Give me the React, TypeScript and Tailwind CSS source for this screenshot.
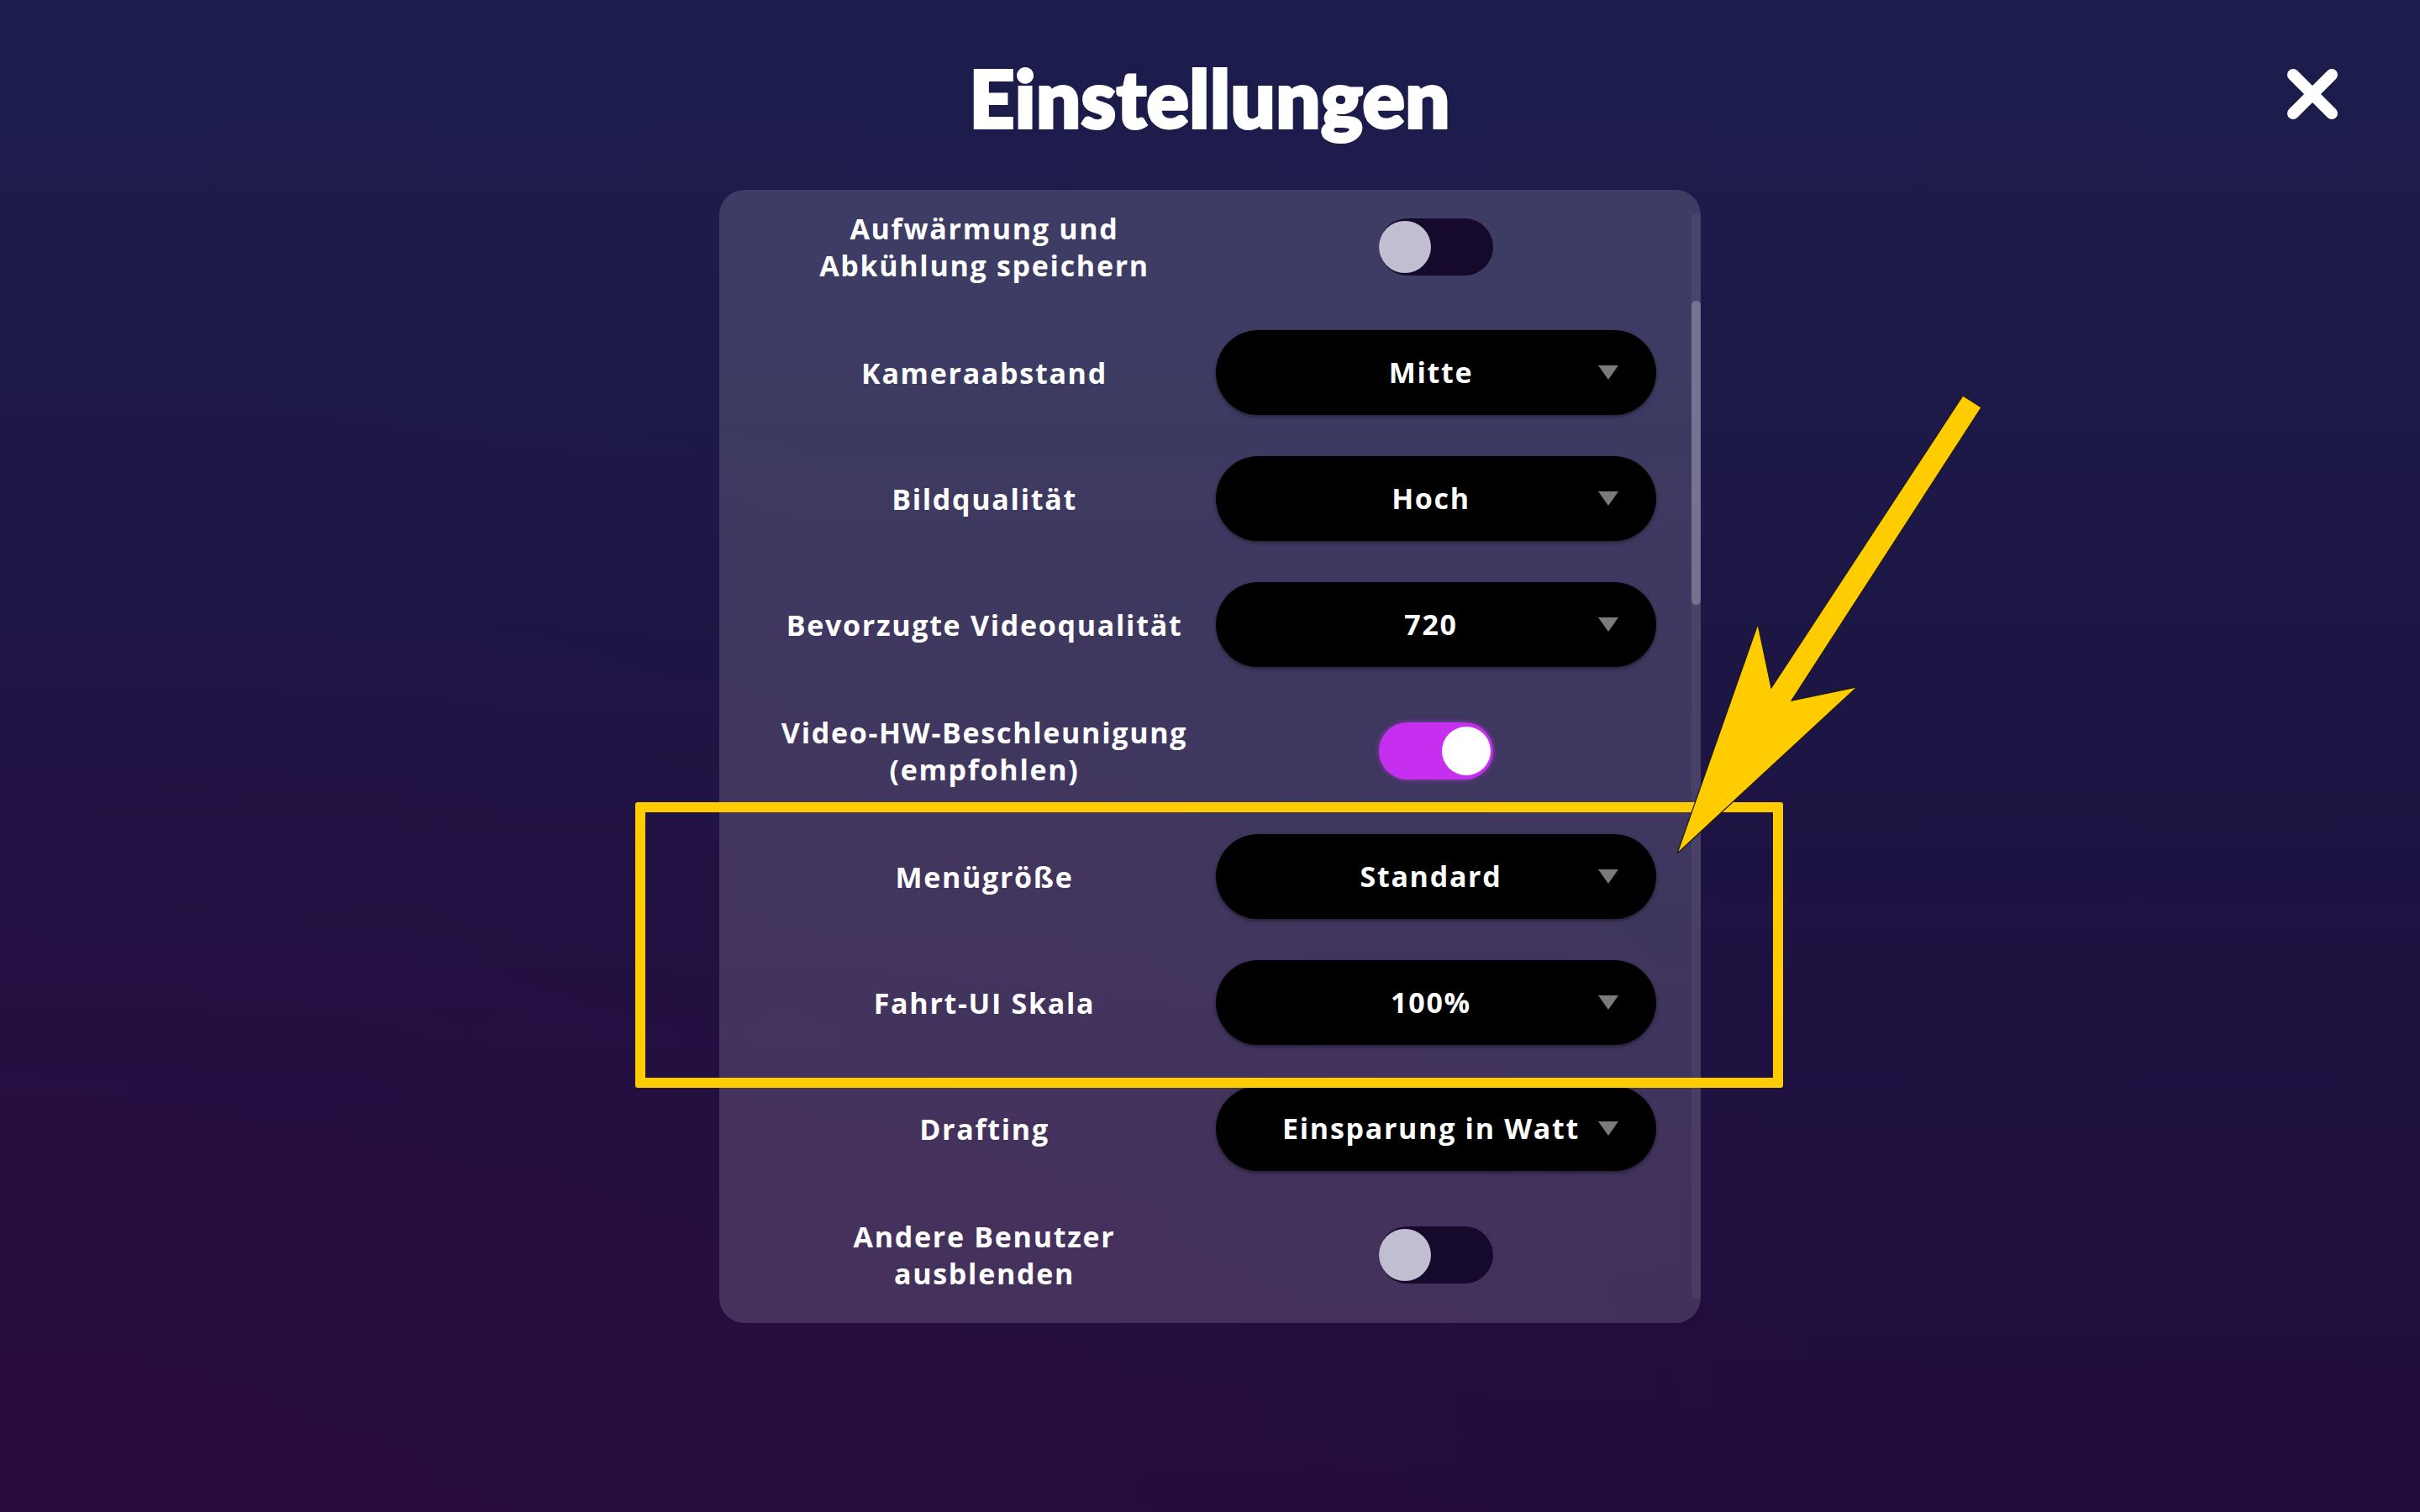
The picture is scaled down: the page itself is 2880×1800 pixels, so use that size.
import { useState } from "react";

type Row =
  | { kind: "toggle"; label: string[]; on: boolean }
  | { kind: "select"; label: string[]; value: string };

const rows: Row[] = [
  { kind: "toggle", label: ["Aufwärmung und", "Abkühlung speichern"], on: false },
  { kind: "select", label: ["Kameraabstand"], value: "Mitte" },
  { kind: "select", label: ["Bildqualität"], value: "Hoch" },
  { kind: "select", label: ["Bevorzugte Videoqualität"], value: "720" },
  { kind: "toggle", label: ["Video-HW-Beschleunigung", "(empfohlen)"], on: true },
  { kind: "select", label: ["Menügröße"], value: "Standard" },
  { kind: "select", label: ["Fahrt-UI Skala"], value: "100%" },
  { kind: "select", label: ["Drafting"], value: "Einsparung in Watt" },
  { kind: "toggle", label: ["Andere Benutzer", "ausblenden"], on: false },
];

const CaretDown = () => (
  <svg viewBox="0 0 24 17" width="24" height="17" aria-hidden="true">
    <path d="M0 0h24L12 17z" fill="#7b7b7b" />
  </svg>
);

const CloseIcon = () => (
  <svg viewBox="0 0 60 60" width="60" height="60" aria-hidden="true">
    <path d="M7 7l46 46M53 7 7 53" stroke="#fff" strokeWidth="14" strokeLinecap="round" />
  </svg>
);

const Toggle = ({ initial }: { initial: boolean }) => {
  const [on, setOn] = useState(initial);
  return (
    <button
      type="button"
      onClick={() => setOn(!on)}
      aria-pressed={on}
      className={`flex h-[68px] w-[136px] items-center rounded-full p-[3px] ${
        on ? "justify-end bg-[#c62ff0] shadow-[0_0_6px_rgba(210,60,250,0.55)]" : "justify-start bg-[#150a2b]"
      }`}
    >
      <span
        className={`block rounded-full ${on ? "h-[58px] w-[58px] bg-white" : "-ml-[3px] h-[62px] w-[62px] bg-[#c1bed1]"}`}
      />
    </button>
  );
};

const Select = ({ value }: { value: string }) => (
  <button
    type="button"
    className="flex h-[101px] w-[524px] items-center rounded-full bg-black pl-[57px] pr-[45px] shadow-[0_2px_4px_rgba(0,0,0,0.45)]"
  >
    <span className="flex-1 text-center text-[34px] font-bold tracking-[0.05em] text-white">{value}</span>
    <CaretDown />
  </button>
);

export default function App() {
  return (
    <div
      className="relative h-[1800px] w-full overflow-hidden bg-[linear-gradient(180deg,#1c1d4d_0%,#1d1644_45%,#200b3c_100%)]"
      style={{ fontFamily: '"Open Sans", "Noto Sans", sans-serif' }}
    >
      <div className="pointer-events-none absolute inset-0 bg-[radial-gradient(ellipse_at_0%_100%,rgba(60,10,70,0.4),transparent_55%)]" />

      <div className="relative flex flex-col items-center">
        <h1
          className="mt-[66px] h-[160px] text-[93px] leading-[100px] font-black tracking-[1px] text-white [-webkit-text-stroke:4px_white]"
          style={{ fontFamily: 'Lato, "Open Sans", sans-serif' }}
        >
          Einstellungen
        </h1>

        <div className="relative w-[1168px] rounded-[30px] bg-white/15 pt-[17px] pb-[31px] pl-[40px]">
          <div className="flex flex-col gap-[49px]">
            {rows.map((row, i) => (
              <div key={i} className="flex h-[101px] items-center">
                <div className="w-[551px] text-center text-[34px] leading-[44px] font-bold tracking-[0.05em] text-white">
                  {row.label.map((line) => (
                    <div key={line}>{line}</div>
                  ))}
                </div>
                <div className="flex w-[524px] justify-center">
                  {row.kind === "toggle" ? <Toggle initial={row.on} /> : <Select value={row.value} />}
                </div>
              </div>
            ))}
          </div>

          {/* scrollbar */}
          <div className="absolute top-[29px] right-0 bottom-[29px] w-[11px] rounded-full bg-white/5">
            <div className="mt-[103px] h-[362px] w-full rounded-full bg-white/25" />
          </div>
        </div>
      </div>

      <button type="button" aria-label="Schließen" className="absolute top-[82px] left-[2722px]">
        <CloseIcon />
      </button>

      {/* highlight frame */}
      <div className="pointer-events-none absolute top-[955px] left-[756px] h-[340px] w-[1366px] rounded-[3px] border-[12px] border-[#ffcc00]" />

      <svg className="pointer-events-none absolute inset-0" width="2880" height="1800" aria-hidden="true">
        <polygon
          points="2336,471 2358,485 2132,834 2210,818 1996,1016 2092,743 2108,819"
          fill="#ffcc00"
          stroke="#1a1a1a"
          strokeWidth="1.2"
          strokeLinejoin="miter"
        />
      </svg>
    </div>
  );
}
